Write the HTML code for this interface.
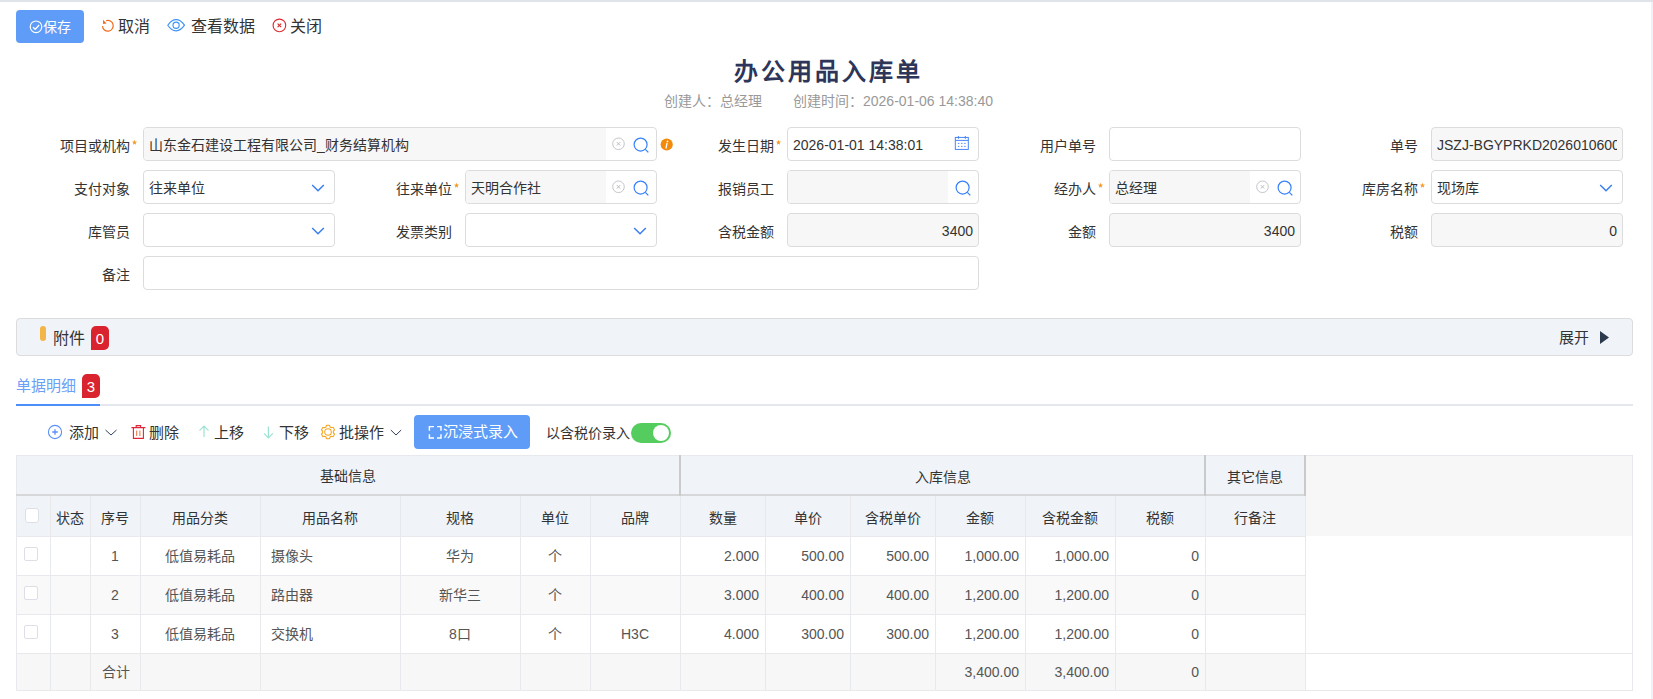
<!DOCTYPE html>
<html lang="zh-CN"><head><meta charset="utf-8"><title>办公用品入库单</title>
<style>
html,body{margin:0;padding:0;background:#fff;}
body{position:relative;width:1653px;height:699px;overflow:hidden;font-family:'Liberation Sans', sans-serif;}
div{box-sizing:content-box;}
svg{overflow:visible;}
</style></head><body>
<div style="position:absolute;left:0px;top:0px;width:1653px;height:2px;background:#dfe3ea"></div>
<div style="position:absolute;left:1651px;top:2px;width:2px;height:697px;background:#eef1f7"></div>
<div style="position:absolute;left:16px;top:10px;width:68px;height:33px;background:#5e9cf8;border-radius:4px"></div>
<svg style="position:absolute;left:29px;top:20px" width="14" height="14" viewBox="0 0 14 14"><circle cx="7" cy="6.8" r="5.8" fill="none" stroke="#fff" stroke-width="1.15"/><path d="M4 7.2 L6.2 9.3 L10.2 5" fill="none" stroke="#fff" stroke-width="1.3"/></svg>
<div style="position:absolute;left:43px;top:15.5px;width:400px;height:22px;line-height:22px;font-size:14px;color:#fff;text-align:left;font-weight:normal;white-space:nowrap;">保存</div>
<svg style="position:absolute;left:98px;top:16px" width="20" height="20" viewBox="0 0 20 20"><path d="M4.5 10.1 A5.35 5.35 0 1 0 8.1 4.7" fill="none" stroke="#f26b1d" stroke-width="1.2"/><path d="M5.0 3.8 L5.1 7.9 L8.5 7.5 Z" fill="#f26b1d"/></svg>
<div style="position:absolute;left:118px;top:13.5px;width:400px;height:25px;line-height:25px;font-size:16px;color:#333;text-align:left;font-weight:normal;white-space:nowrap;">取消</div>
<svg style="position:absolute;left:164px;top:14px" width="24" height="24" viewBox="0 0 24 24"><path d="M3.8 11.2 C6.5 7.2 9 5.6 12.1 5.6 C15.2 5.6 17.7 7.2 20.5 11.2 C17.7 15.2 15.2 16.8 12.1 16.8 C9 16.8 6.5 15.2 3.8 11.2 Z" fill="none" stroke="#3d93f7" stroke-width="1.15"/><circle cx="12.1" cy="11.2" r="3.1" fill="none" stroke="#3d93f7" stroke-width="1.15"/></svg>
<div style="position:absolute;left:190.5px;top:13.5px;width:400px;height:25px;line-height:25px;font-size:16px;color:#333;text-align:left;font-weight:normal;white-space:nowrap;">查看数据</div>
<svg style="position:absolute;left:272px;top:18.4px" width="15" height="15" viewBox="0 0 15 15"><circle cx="7.4" cy="7.4" r="6.3" fill="none" stroke="#e02a30" stroke-width="1.15"/><path d="M5.6 5.6 L9.2 9.2 M9.2 5.6 L5.6 9.2" stroke="#e02a30" stroke-width="1.2"/></svg>
<div style="position:absolute;left:289.5px;top:13.5px;width:400px;height:25px;line-height:25px;font-size:16px;color:#333;text-align:left;font-weight:normal;white-space:nowrap;">关闭</div>
<div style="position:absolute;left:627.0px;top:53.0px;width:400px;height:38px;line-height:38px;font-size:24px;color:#2d3559;text-align:center;font-weight:bold;white-space:nowrap;letter-spacing:3px;text-indent:3px">办公用品入库单</div>
<div style="position:absolute;left:664px;top:90.0px;width:200px;height:22px;line-height:22px;font-size:14px;color:#999;text-align:left;font-weight:normal;white-space:nowrap;">创建人：总经理</div>
<div style="position:absolute;left:793px;top:90.0px;width:300px;height:22px;line-height:22px;font-size:14px;color:#999;text-align:left;font-weight:normal;white-space:nowrap;">创建时间：2026-01-06 14:38:40</div>
<div style="position:absolute;left:10px;top:134.5px;width:120px;height:22px;line-height:22px;font-size:14px;color:#333;text-align:right;font-weight:normal;white-space:nowrap;">项目或机构</div>
<svg style="position:absolute;left:130px;top:138.0px" width="9" height="9" viewBox="0 0 9 9"><path d="M4.50 1.75 L5.18 3.57 L7.12 3.65 L5.59 4.86 L6.12 6.72 L4.50 5.65 L2.88 6.72 L3.41 4.86 L1.88 3.65 L3.82 3.57 Z" fill="#f39a2b"/></svg>
<div style="position:absolute;left:143px;top:127px;width:512px;height:32px;border:1px solid #dcdcdc;border-radius:4px;background:#fff"></div>
<div style="position:absolute;left:144px;top:128px;width:462px;height:32px;background:#f7f7f7;border-radius:3px 0 0 3px"></div>
<div style="position:absolute;left:149px;top:134.0px;width:453px;height:22px;line-height:22px;font-size:14px;color:#333;text-align:left;font-weight:normal;white-space:nowrap;">山东金石建设工程有限公司_财务结算机构</div>
<svg style="position:absolute;left:611px;top:137px" width="14" height="14" viewBox="0 0 14 14"><circle cx="7.5" cy="6.8" r="5.8" fill="none" stroke="#c3c6cc" stroke-width="1"/><path d="M5.8 5.1 L9.2 8.5 M9.2 5.1 L5.8 8.5" stroke="#b8bcc4" stroke-width="1"/></svg>
<svg style="position:absolute;left:633px;top:137px" width="17" height="17" viewBox="0 0 17 17"><circle cx="7.6" cy="7.6" r="6.5" fill="none" stroke="#3580f8" stroke-width="1.2"/><path d="M12.3 12.3 L15.3 15.3" stroke="#3580f8" stroke-width="1.2"/></svg>
<svg style="position:absolute;left:660px;top:138px" width="13" height="13" viewBox="0 0 13 13"><circle cx="6.7" cy="6.5" r="6.1" fill="#f28b0c"/><circle cx="7.5" cy="3.4" r="0.85" fill="#fff"/><path d="M7 5.4 L6 10" stroke="#fff" stroke-width="1.25" stroke-linecap="round"/></svg>
<div style="position:absolute;left:654px;top:134.5px;width:120px;height:22px;line-height:22px;font-size:14px;color:#333;text-align:right;font-weight:normal;white-space:nowrap;">发生日期</div>
<svg style="position:absolute;left:774px;top:138.0px" width="9" height="9" viewBox="0 0 9 9"><path d="M4.50 1.75 L5.18 3.57 L7.12 3.65 L5.59 4.86 L6.12 6.72 L4.50 5.65 L2.88 6.72 L3.41 4.86 L1.88 3.65 L3.82 3.57 Z" fill="#f39a2b"/></svg>
<div style="position:absolute;left:787px;top:127px;width:190px;height:32px;border:1px solid #dcdcdc;border-radius:4px;background:#fff"></div>
<div style="position:absolute;left:793px;top:134.0px;width:160px;height:22px;line-height:22px;font-size:14px;color:#333;text-align:left;font-weight:normal;white-space:nowrap;">2026-01-01 14:38:01</div>
<svg style="position:absolute;left:948px;top:130px" width="28" height="28" viewBox="0 0 28 28"><rect x="7.3" y="7.4" width="13" height="12" fill="none" stroke="#3f7ff5" stroke-width="0.95"/><path d="M7.3 10.4 H20.3 M10.4 6 V8.8 M17.3 6 V8.8" fill="none" stroke="#3f7ff5" stroke-width="0.95"/><path d="M9.9 13.4 h1.4 M13.1 13.4 h1.4 M16.2 13.4 h1.4 M9.9 16.4 h1.4 M13.1 16.4 h1.4 M16.2 16.4 h1.4" stroke="#3f7ff5" stroke-width="0.95"/></svg>
<div style="position:absolute;left:976px;top:134.5px;width:120px;height:22px;line-height:22px;font-size:14px;color:#333;text-align:right;font-weight:normal;white-space:nowrap;">用户单号</div>
<div style="position:absolute;left:1109px;top:127px;width:190px;height:32px;border:1px solid #dcdcdc;border-radius:4px;background:#fff"></div>
<div style="position:absolute;left:1298px;top:134.5px;width:120px;height:22px;line-height:22px;font-size:14px;color:#333;text-align:right;font-weight:normal;white-space:nowrap;">单号</div>
<div style="position:absolute;left:1431px;top:127px;width:190px;height:32px;border:1px solid #dcdcdc;border-radius:4px;background:#f7f7f7"></div>
<div style="position:absolute;left:1437px;top:134.0px;width:180px;height:22px;line-height:22px;font-size:14px;color:#333;text-align:left;font-weight:normal;white-space:nowrap;overflow:hidden">JSZJ-BGYPRKD20260106001</div>
<div style="position:absolute;left:10px;top:177.5px;width:120px;height:22px;line-height:22px;font-size:14px;color:#333;text-align:right;font-weight:normal;white-space:nowrap;">支付对象</div>
<div style="position:absolute;left:143px;top:170px;width:190px;height:32px;border:1px solid #dcdcdc;border-radius:4px;background:#fff"></div>
<div style="position:absolute;left:149px;top:177.0px;width:120px;height:22px;line-height:22px;font-size:14px;color:#333;text-align:left;font-weight:normal;white-space:nowrap;">往来单位</div>
<svg style="position:absolute;left:311px;top:183px" width="14" height="10" viewBox="0 0 14 10"><path d="M1.2 2 L7 7.8 L12.8 2" fill="none" stroke="#3b7ef0" stroke-width="1.5"/></svg>
<div style="position:absolute;left:332px;top:177.5px;width:120px;height:22px;line-height:22px;font-size:14px;color:#333;text-align:right;font-weight:normal;white-space:nowrap;">往来单位</div>
<svg style="position:absolute;left:452px;top:181.0px" width="9" height="9" viewBox="0 0 9 9"><path d="M4.50 1.75 L5.18 3.57 L7.12 3.65 L5.59 4.86 L6.12 6.72 L4.50 5.65 L2.88 6.72 L3.41 4.86 L1.88 3.65 L3.82 3.57 Z" fill="#f39a2b"/></svg>
<div style="position:absolute;left:465px;top:170px;width:190px;height:32px;border:1px solid #dcdcdc;border-radius:4px;background:#fff"></div>
<div style="position:absolute;left:466px;top:171px;width:140px;height:32px;background:#f7f7f7;border-radius:3px 0 0 3px"></div>
<div style="position:absolute;left:471px;top:177.0px;width:131px;height:22px;line-height:22px;font-size:14px;color:#333;text-align:left;font-weight:normal;white-space:nowrap;">天明合作社</div>
<svg style="position:absolute;left:611px;top:180px" width="14" height="14" viewBox="0 0 14 14"><circle cx="7.5" cy="6.8" r="5.8" fill="none" stroke="#c3c6cc" stroke-width="1"/><path d="M5.8 5.1 L9.2 8.5 M9.2 5.1 L5.8 8.5" stroke="#b8bcc4" stroke-width="1"/></svg>
<svg style="position:absolute;left:633px;top:180px" width="17" height="17" viewBox="0 0 17 17"><circle cx="7.6" cy="7.6" r="6.5" fill="none" stroke="#3580f8" stroke-width="1.2"/><path d="M12.3 12.3 L15.3 15.3" stroke="#3580f8" stroke-width="1.2"/></svg>
<div style="position:absolute;left:654px;top:177.5px;width:120px;height:22px;line-height:22px;font-size:14px;color:#333;text-align:right;font-weight:normal;white-space:nowrap;">报销员工</div>
<div style="position:absolute;left:787px;top:170px;width:190px;height:32px;border:1px solid #dcdcdc;border-radius:4px;background:#fff"></div>
<div style="position:absolute;left:788px;top:171px;width:160px;height:32px;background:#f7f7f7;border-radius:3px 0 0 3px"></div>
<svg style="position:absolute;left:955px;top:180px" width="17" height="17" viewBox="0 0 17 17"><circle cx="7.6" cy="7.6" r="6.5" fill="none" stroke="#3580f8" stroke-width="1.2"/><path d="M12.3 12.3 L15.3 15.3" stroke="#3580f8" stroke-width="1.2"/></svg>
<div style="position:absolute;left:976px;top:177.5px;width:120px;height:22px;line-height:22px;font-size:14px;color:#333;text-align:right;font-weight:normal;white-space:nowrap;">经办人</div>
<svg style="position:absolute;left:1096px;top:181.0px" width="9" height="9" viewBox="0 0 9 9"><path d="M4.50 1.75 L5.18 3.57 L7.12 3.65 L5.59 4.86 L6.12 6.72 L4.50 5.65 L2.88 6.72 L3.41 4.86 L1.88 3.65 L3.82 3.57 Z" fill="#f39a2b"/></svg>
<div style="position:absolute;left:1109px;top:170px;width:190px;height:32px;border:1px solid #dcdcdc;border-radius:4px;background:#fff"></div>
<div style="position:absolute;left:1110px;top:171px;width:140px;height:32px;background:#f7f7f7;border-radius:3px 0 0 3px"></div>
<div style="position:absolute;left:1115px;top:177.0px;width:131px;height:22px;line-height:22px;font-size:14px;color:#333;text-align:left;font-weight:normal;white-space:nowrap;">总经理</div>
<svg style="position:absolute;left:1255px;top:180px" width="14" height="14" viewBox="0 0 14 14"><circle cx="7.5" cy="6.8" r="5.8" fill="none" stroke="#c3c6cc" stroke-width="1"/><path d="M5.8 5.1 L9.2 8.5 M9.2 5.1 L5.8 8.5" stroke="#b8bcc4" stroke-width="1"/></svg>
<svg style="position:absolute;left:1277px;top:180px" width="17" height="17" viewBox="0 0 17 17"><circle cx="7.6" cy="7.6" r="6.5" fill="none" stroke="#3580f8" stroke-width="1.2"/><path d="M12.3 12.3 L15.3 15.3" stroke="#3580f8" stroke-width="1.2"/></svg>
<div style="position:absolute;left:1298px;top:177.5px;width:120px;height:22px;line-height:22px;font-size:14px;color:#333;text-align:right;font-weight:normal;white-space:nowrap;">库房名称</div>
<svg style="position:absolute;left:1418px;top:181.0px" width="9" height="9" viewBox="0 0 9 9"><path d="M4.50 1.75 L5.18 3.57 L7.12 3.65 L5.59 4.86 L6.12 6.72 L4.50 5.65 L2.88 6.72 L3.41 4.86 L1.88 3.65 L3.82 3.57 Z" fill="#f39a2b"/></svg>
<div style="position:absolute;left:1431px;top:170px;width:190px;height:32px;border:1px solid #dcdcdc;border-radius:4px;background:#fff"></div>
<div style="position:absolute;left:1437px;top:177.0px;width:120px;height:22px;line-height:22px;font-size:14px;color:#333;text-align:left;font-weight:normal;white-space:nowrap;">现场库</div>
<svg style="position:absolute;left:1599px;top:183px" width="14" height="10" viewBox="0 0 14 10"><path d="M1.2 2 L7 7.8 L12.8 2" fill="none" stroke="#3b7ef0" stroke-width="1.5"/></svg>
<div style="position:absolute;left:10px;top:220.5px;width:120px;height:22px;line-height:22px;font-size:14px;color:#333;text-align:right;font-weight:normal;white-space:nowrap;">库管员</div>
<div style="position:absolute;left:143px;top:213px;width:190px;height:32px;border:1px solid #dcdcdc;border-radius:4px;background:#fff"></div>
<svg style="position:absolute;left:311px;top:226px" width="14" height="10" viewBox="0 0 14 10"><path d="M1.2 2 L7 7.8 L12.8 2" fill="none" stroke="#3b7ef0" stroke-width="1.5"/></svg>
<div style="position:absolute;left:332px;top:220.5px;width:120px;height:22px;line-height:22px;font-size:14px;color:#333;text-align:right;font-weight:normal;white-space:nowrap;">发票类别</div>
<div style="position:absolute;left:465px;top:213px;width:190px;height:32px;border:1px solid #dcdcdc;border-radius:4px;background:#fff"></div>
<svg style="position:absolute;left:633px;top:226px" width="14" height="10" viewBox="0 0 14 10"><path d="M1.2 2 L7 7.8 L12.8 2" fill="none" stroke="#3b7ef0" stroke-width="1.5"/></svg>
<div style="position:absolute;left:654px;top:220.5px;width:120px;height:22px;line-height:22px;font-size:14px;color:#333;text-align:right;font-weight:normal;white-space:nowrap;">含税金额</div>
<div style="position:absolute;left:787px;top:213px;width:190px;height:32px;border:1px solid #dcdcdc;border-radius:4px;background:#f7f7f7"></div>
<div style="position:absolute;left:873px;top:220.0px;width:100px;height:22px;line-height:22px;font-size:14px;color:#333;text-align:right;font-weight:normal;white-space:nowrap;">3400</div>
<div style="position:absolute;left:976px;top:220.5px;width:120px;height:22px;line-height:22px;font-size:14px;color:#333;text-align:right;font-weight:normal;white-space:nowrap;">金额</div>
<div style="position:absolute;left:1109px;top:213px;width:190px;height:32px;border:1px solid #dcdcdc;border-radius:4px;background:#f7f7f7"></div>
<div style="position:absolute;left:1195px;top:220.0px;width:100px;height:22px;line-height:22px;font-size:14px;color:#333;text-align:right;font-weight:normal;white-space:nowrap;">3400</div>
<div style="position:absolute;left:1298px;top:220.5px;width:120px;height:22px;line-height:22px;font-size:14px;color:#333;text-align:right;font-weight:normal;white-space:nowrap;">税额</div>
<div style="position:absolute;left:1431px;top:213px;width:190px;height:32px;border:1px solid #dcdcdc;border-radius:4px;background:#f7f7f7"></div>
<div style="position:absolute;left:1517px;top:220.0px;width:100px;height:22px;line-height:22px;font-size:14px;color:#333;text-align:right;font-weight:normal;white-space:nowrap;">0</div>
<div style="position:absolute;left:10px;top:263.5px;width:120px;height:22px;line-height:22px;font-size:14px;color:#333;text-align:right;font-weight:normal;white-space:nowrap;">备注</div>
<div style="position:absolute;left:143px;top:256px;width:834px;height:32px;border:1px solid #dcdcdc;border-radius:4px;background:#fff"></div>
<div style="position:absolute;left:16px;top:318px;width:1615px;height:36px;border:1px solid #dcdcdc;border-radius:4px;background:#f0f3f8"></div>
<div style="position:absolute;left:40px;top:326px;width:6px;height:15px;background:#f3b548;border-radius:3px"></div>
<div style="position:absolute;left:53px;top:326.0px;width:60px;height:25px;line-height:25px;font-size:16px;color:#333;text-align:left;font-weight:normal;white-space:nowrap;">附件</div>
<div style="position:absolute;left:91px;top:326px;width:18px;height:24px;background:#d9232e;border-radius:5px 5px 5px 0"></div>
<div style="position:absolute;left:91.0px;top:327.0px;width:18px;height:24px;line-height:24px;font-size:15px;color:#fff;text-align:center;font-weight:normal;white-space:nowrap;">0</div>
<div style="position:absolute;left:1529px;top:325.5px;width:60px;height:24px;line-height:24px;font-size:15px;color:#333;text-align:right;font-weight:normal;white-space:nowrap;">展开</div>
<svg style="position:absolute;left:1599px;top:330px" width="11" height="15" viewBox="0 0 11 15"><path d="M1 1 L10 7.5 L1 14 Z" fill="#2c3a4e"/></svg>
<div style="position:absolute;left:16px;top:374.0px;width:80px;height:24px;line-height:24px;font-size:15px;color:#6aa0f5;text-align:left;font-weight:normal;white-space:nowrap;">单据明细</div>
<div style="position:absolute;left:82px;top:374px;width:18px;height:24px;background:#d9232e;border-radius:5px 5px 5px 0"></div>
<div style="position:absolute;left:82.0px;top:375.0px;width:18px;height:24px;line-height:24px;font-size:15px;color:#fff;text-align:center;font-weight:normal;white-space:nowrap;">3</div>
<div style="position:absolute;left:16px;top:404px;width:1617px;height:2px;background:#e4e7ed"></div>
<div style="position:absolute;left:16px;top:404px;width:84px;height:2px;background:#4d8ff8"></div>
<svg style="position:absolute;left:47px;top:424px" width="16" height="16" viewBox="0 0 16 16"><circle cx="8" cy="8" r="6.6" fill="none" stroke="#5b8ff9" stroke-width="1.1"/><path d="M8 5.2 V10.8 M5.2 8 H10.8" stroke="#5b8ff9" stroke-width="1.3"/></svg>
<div style="position:absolute;left:68.5px;top:420.8px;width:40px;height:24px;line-height:24px;font-size:15px;color:#333;text-align:left;font-weight:normal;white-space:nowrap;">添加</div>
<svg style="position:absolute;left:104px;top:428px" width="14" height="9" viewBox="0 0 14 9"><path d="M1.5 2 L7 7 L12.5 2" fill="none" stroke="#34405a" stroke-width="1"/></svg>
<svg style="position:absolute;left:131px;top:424px" width="15" height="16" viewBox="0 0 15 16"><path d="M0.4 3.6 H14.4 M5.2 3.6 V1.6 H9.6 V3.6 M2.4 3.6 V14.4 H12.4 V3.6" fill="none" stroke="#e0243a" stroke-width="1.1"/><path d="M5.7 6.5 V12 M8.9 6.5 V12" stroke="#e8703a" stroke-width="1"/></svg>
<div style="position:absolute;left:149px;top:420.8px;width:40px;height:24px;line-height:24px;font-size:15px;color:#333;text-align:left;font-weight:normal;white-space:nowrap;">删除</div>
<svg style="position:absolute;left:197px;top:424px" width="14" height="16" viewBox="0 0 14 16"><path d="M7 2 V13 M2.5 6.6 L7 2 L11.5 6.6" fill="none" stroke="#9fe2d3" stroke-width="1.2"/></svg>
<div style="position:absolute;left:214px;top:420.8px;width:40px;height:24px;line-height:24px;font-size:15px;color:#333;text-align:left;font-weight:normal;white-space:nowrap;">上移</div>
<svg style="position:absolute;left:261px;top:424px" width="15" height="16" viewBox="0 0 15 16"><path d="M7.4 2.5 V13.8 M3 9.3 L7.4 13.8 L11.8 9.3" fill="none" stroke="#9fe2d3" stroke-width="1.2"/></svg>
<div style="position:absolute;left:279px;top:420.8px;width:40px;height:24px;line-height:24px;font-size:15px;color:#333;text-align:left;font-weight:normal;white-space:nowrap;">下移</div>
<svg style="position:absolute;left:320px;top:424px" width="16" height="16" viewBox="0 0 16 16"><path d="M5.98 2.99 L6.45 1.28 L9.55 1.28 L10.02 2.99 L11.32 3.74 L13.05 3.29 L14.60 5.98 L13.35 7.25 L13.35 8.75 L14.60 10.02 L13.05 12.71 L11.32 12.26 L10.02 13.01 L9.55 14.72 L6.45 14.72 L5.98 13.01 L4.68 12.26 L2.95 12.71 L1.40 10.02 L2.65 8.75 L2.65 7.25 L1.40 5.98 L2.95 3.29 L4.68 3.74 Z" fill="none" stroke="#f5a623" stroke-width="1.1" stroke-linejoin="round"/><circle cx="8" cy="8" r="3.3" fill="none" stroke="#f5a623" stroke-width="1.1"/></svg>
<div style="position:absolute;left:339px;top:420.8px;width:60px;height:24px;line-height:24px;font-size:15px;color:#333;text-align:left;font-weight:normal;white-space:nowrap;">批操作</div>
<svg style="position:absolute;left:389px;top:428px" width="14" height="9" viewBox="0 0 14 9"><path d="M1.8 2 L7 7 L12.2 2" fill="none" stroke="#34405a" stroke-width="1"/></svg>
<div style="position:absolute;left:414px;top:415px;width:116px;height:34px;background:#5e9cf8;border-radius:4px"></div>
<svg style="position:absolute;left:428px;top:425px" width="14" height="14" viewBox="0 0 14 14"><path d="M1.4 5.8 V1.6 H6 M9 1.6 H13 V5.8 M1.4 9.2 V13 H6 M9 13 H13 V9.2" fill="none" stroke="#fff" stroke-width="1.45"/></svg>
<div style="position:absolute;left:443px;top:420.0px;width:90px;height:24px;line-height:24px;font-size:15px;color:#fff;text-align:left;font-weight:normal;white-space:nowrap;">沉浸式录入</div>
<div style="position:absolute;left:546px;top:421.5px;width:90px;height:22px;line-height:22px;font-size:14px;color:#333;text-align:left;font-weight:normal;white-space:nowrap;">以含税价录入</div>
<div style="position:absolute;left:631px;top:423px;width:40px;height:20px;background:#55cd5e;border-radius:10px"></div>
<div style="position:absolute;left:653px;top:425px;width:16px;height:16px;background:#fff;border-radius:50%"></div>
<div style="position:absolute;left:16px;top:455px;width:1289px;height:81px;background:#f0f3f8"></div>
<div style="position:absolute;left:1305px;top:455px;width:328px;height:81px;background:#f7f7f7"></div>
<div style="position:absolute;left:16px;top:536px;width:1289px;height:39px;background:#fff"></div>
<div style="position:absolute;left:16px;top:575px;width:1289px;height:39px;background:#f9f9f9"></div>
<div style="position:absolute;left:16px;top:614px;width:1289px;height:39px;background:#fff"></div>
<div style="position:absolute;left:16px;top:653px;width:1617px;height:37px;background:#fff"></div>
<div style="position:absolute;left:16px;top:653px;width:1289px;height:37px;background:#f7f7f7"></div>
<div style="position:absolute;left:16px;top:455px;width:1615px;height:234px;border:1px solid #e8e9ec"></div>
<div style="position:absolute;left:16px;top:494px;width:1289px;height:2px;background:#d6d7d9"></div>
<div style="position:absolute;left:16px;top:536px;width:1289px;height:1px;background:#e8e9ec"></div>
<div style="position:absolute;left:16px;top:575px;width:1289px;height:1px;background:#e8e9ec"></div>
<div style="position:absolute;left:16px;top:614px;width:1289px;height:1px;background:#e8e9ec"></div>
<div style="position:absolute;left:16px;top:653px;width:1617px;height:1px;background:#e8e9ec"></div>
<div style="position:absolute;left:50px;top:496px;width:1px;height:194px;background:#e8e9ec"></div>
<div style="position:absolute;left:90px;top:496px;width:1px;height:194px;background:#e8e9ec"></div>
<div style="position:absolute;left:140px;top:496px;width:1px;height:194px;background:#e8e9ec"></div>
<div style="position:absolute;left:260px;top:496px;width:1px;height:194px;background:#e8e9ec"></div>
<div style="position:absolute;left:400px;top:496px;width:1px;height:194px;background:#e8e9ec"></div>
<div style="position:absolute;left:520px;top:496px;width:1px;height:194px;background:#e8e9ec"></div>
<div style="position:absolute;left:590px;top:496px;width:1px;height:194px;background:#e8e9ec"></div>
<div style="position:absolute;left:680px;top:496px;width:1px;height:194px;background:#e8e9ec"></div>
<div style="position:absolute;left:765px;top:496px;width:1px;height:194px;background:#e8e9ec"></div>
<div style="position:absolute;left:850px;top:496px;width:1px;height:194px;background:#e8e9ec"></div>
<div style="position:absolute;left:935px;top:496px;width:1px;height:194px;background:#e8e9ec"></div>
<div style="position:absolute;left:1025px;top:496px;width:1px;height:194px;background:#e8e9ec"></div>
<div style="position:absolute;left:1115px;top:496px;width:1px;height:194px;background:#e8e9ec"></div>
<div style="position:absolute;left:1205px;top:496px;width:1px;height:194px;background:#e8e9ec"></div>
<div style="position:absolute;left:1305px;top:496px;width:1px;height:194px;background:#e8e9ec"></div>
<div style="position:absolute;left:679px;top:455px;width:2px;height:41px;background:#cacaca"></div>
<div style="position:absolute;left:1204px;top:455px;width:2px;height:41px;background:#cacaca"></div>
<div style="position:absolute;left:1304px;top:455px;width:2px;height:41px;background:#cacaca"></div>
<div style="position:absolute;left:248.0px;top:466.0px;width:200px;height:21px;line-height:21px;font-size:14px;color:#333;text-align:center;font-weight:normal;white-space:nowrap;">基础信息</div>
<div style="position:absolute;left:842.5px;top:465.5px;width:200px;height:22px;line-height:22px;font-size:14px;color:#333;text-align:center;font-weight:normal;white-space:nowrap;">入库信息</div>
<div style="position:absolute;left:1205.0px;top:465.5px;width:100px;height:22px;line-height:22px;font-size:14px;color:#333;text-align:center;font-weight:normal;white-space:nowrap;">其它信息</div>
<div style="position:absolute;left:50.0px;top:506.5px;width:40px;height:22px;line-height:22px;font-size:14px;color:#333;text-align:center;font-weight:normal;white-space:nowrap;">状态</div>
<div style="position:absolute;left:90.0px;top:506.5px;width:50px;height:22px;line-height:22px;font-size:14px;color:#333;text-align:center;font-weight:normal;white-space:nowrap;">序号</div>
<div style="position:absolute;left:140.0px;top:506.5px;width:120px;height:22px;line-height:22px;font-size:14px;color:#333;text-align:center;font-weight:normal;white-space:nowrap;">用品分类</div>
<div style="position:absolute;left:260.0px;top:506.5px;width:140px;height:22px;line-height:22px;font-size:14px;color:#333;text-align:center;font-weight:normal;white-space:nowrap;">用品名称</div>
<div style="position:absolute;left:400.0px;top:506.5px;width:120px;height:22px;line-height:22px;font-size:14px;color:#333;text-align:center;font-weight:normal;white-space:nowrap;">规格</div>
<div style="position:absolute;left:520.0px;top:506.5px;width:70px;height:22px;line-height:22px;font-size:14px;color:#333;text-align:center;font-weight:normal;white-space:nowrap;">单位</div>
<div style="position:absolute;left:590.0px;top:506.5px;width:90px;height:22px;line-height:22px;font-size:14px;color:#333;text-align:center;font-weight:normal;white-space:nowrap;">品牌</div>
<div style="position:absolute;left:680.0px;top:506.5px;width:85px;height:22px;line-height:22px;font-size:14px;color:#333;text-align:center;font-weight:normal;white-space:nowrap;">数量</div>
<div style="position:absolute;left:765.0px;top:506.5px;width:85px;height:22px;line-height:22px;font-size:14px;color:#333;text-align:center;font-weight:normal;white-space:nowrap;">单价</div>
<div style="position:absolute;left:850.0px;top:506.5px;width:85px;height:22px;line-height:22px;font-size:14px;color:#333;text-align:center;font-weight:normal;white-space:nowrap;">含税单价</div>
<div style="position:absolute;left:935.0px;top:506.5px;width:90px;height:22px;line-height:22px;font-size:14px;color:#333;text-align:center;font-weight:normal;white-space:nowrap;">金额</div>
<div style="position:absolute;left:1025.0px;top:506.5px;width:90px;height:22px;line-height:22px;font-size:14px;color:#333;text-align:center;font-weight:normal;white-space:nowrap;">含税金额</div>
<div style="position:absolute;left:1115.0px;top:506.5px;width:90px;height:22px;line-height:22px;font-size:14px;color:#333;text-align:center;font-weight:normal;white-space:nowrap;">税额</div>
<div style="position:absolute;left:1205.0px;top:506.5px;width:100px;height:22px;line-height:22px;font-size:14px;color:#333;text-align:center;font-weight:normal;white-space:nowrap;">行备注</div>
<div style="position:absolute;left:25px;top:508px;width:12px;height:13px;border:1px solid #dcdfe6;border-radius:3px;background:#fff"></div>
<div style="position:absolute;left:24px;top:546.5px;width:12px;height:12px;border:1px solid #dcdfe6;border-radius:2px;background:#fff"></div>
<div style="position:absolute;left:90.0px;top:544.5px;width:50px;height:22px;line-height:22px;font-size:14px;color:#555;text-align:center;font-weight:normal;white-space:nowrap;">1</div>
<div style="position:absolute;left:140.0px;top:544.5px;width:120px;height:22px;line-height:22px;font-size:14px;color:#555;text-align:center;font-weight:normal;white-space:nowrap;">低值易耗品</div>
<div style="position:absolute;left:271px;top:544.5px;width:128px;height:22px;line-height:22px;font-size:14px;color:#555;text-align:left;font-weight:normal;white-space:nowrap;">摄像头</div>
<div style="position:absolute;left:400.0px;top:544.5px;width:120px;height:22px;line-height:22px;font-size:14px;color:#555;text-align:center;font-weight:normal;white-space:nowrap;">华为</div>
<div style="position:absolute;left:520.0px;top:544.5px;width:70px;height:22px;line-height:22px;font-size:14px;color:#555;text-align:center;font-weight:normal;white-space:nowrap;">个</div>
<div style="position:absolute;left:682px;top:544.5px;width:77px;height:22px;line-height:22px;font-size:14px;color:#555;text-align:right;font-weight:normal;white-space:nowrap;">2.000</div>
<div style="position:absolute;left:767px;top:544.5px;width:77px;height:22px;line-height:22px;font-size:14px;color:#555;text-align:right;font-weight:normal;white-space:nowrap;">500.00</div>
<div style="position:absolute;left:852px;top:544.5px;width:77px;height:22px;line-height:22px;font-size:14px;color:#555;text-align:right;font-weight:normal;white-space:nowrap;">500.00</div>
<div style="position:absolute;left:937px;top:544.5px;width:82px;height:22px;line-height:22px;font-size:14px;color:#555;text-align:right;font-weight:normal;white-space:nowrap;">1,000.00</div>
<div style="position:absolute;left:1027px;top:544.5px;width:82px;height:22px;line-height:22px;font-size:14px;color:#555;text-align:right;font-weight:normal;white-space:nowrap;">1,000.00</div>
<div style="position:absolute;left:1117px;top:544.5px;width:82px;height:22px;line-height:22px;font-size:14px;color:#555;text-align:right;font-weight:normal;white-space:nowrap;">0</div>
<div style="position:absolute;left:24px;top:585.5px;width:12px;height:12px;border:1px solid #dcdfe6;border-radius:2px;background:#fff"></div>
<div style="position:absolute;left:90.0px;top:583.5px;width:50px;height:22px;line-height:22px;font-size:14px;color:#555;text-align:center;font-weight:normal;white-space:nowrap;">2</div>
<div style="position:absolute;left:140.0px;top:583.5px;width:120px;height:22px;line-height:22px;font-size:14px;color:#555;text-align:center;font-weight:normal;white-space:nowrap;">低值易耗品</div>
<div style="position:absolute;left:271px;top:583.5px;width:128px;height:22px;line-height:22px;font-size:14px;color:#555;text-align:left;font-weight:normal;white-space:nowrap;">路由器</div>
<div style="position:absolute;left:400.0px;top:583.5px;width:120px;height:22px;line-height:22px;font-size:14px;color:#555;text-align:center;font-weight:normal;white-space:nowrap;">新华三</div>
<div style="position:absolute;left:520.0px;top:583.5px;width:70px;height:22px;line-height:22px;font-size:14px;color:#555;text-align:center;font-weight:normal;white-space:nowrap;">个</div>
<div style="position:absolute;left:682px;top:583.5px;width:77px;height:22px;line-height:22px;font-size:14px;color:#555;text-align:right;font-weight:normal;white-space:nowrap;">3.000</div>
<div style="position:absolute;left:767px;top:583.5px;width:77px;height:22px;line-height:22px;font-size:14px;color:#555;text-align:right;font-weight:normal;white-space:nowrap;">400.00</div>
<div style="position:absolute;left:852px;top:583.5px;width:77px;height:22px;line-height:22px;font-size:14px;color:#555;text-align:right;font-weight:normal;white-space:nowrap;">400.00</div>
<div style="position:absolute;left:937px;top:583.5px;width:82px;height:22px;line-height:22px;font-size:14px;color:#555;text-align:right;font-weight:normal;white-space:nowrap;">1,200.00</div>
<div style="position:absolute;left:1027px;top:583.5px;width:82px;height:22px;line-height:22px;font-size:14px;color:#555;text-align:right;font-weight:normal;white-space:nowrap;">1,200.00</div>
<div style="position:absolute;left:1117px;top:583.5px;width:82px;height:22px;line-height:22px;font-size:14px;color:#555;text-align:right;font-weight:normal;white-space:nowrap;">0</div>
<div style="position:absolute;left:24px;top:624.5px;width:12px;height:12px;border:1px solid #dcdfe6;border-radius:2px;background:#fff"></div>
<div style="position:absolute;left:90.0px;top:622.5px;width:50px;height:22px;line-height:22px;font-size:14px;color:#555;text-align:center;font-weight:normal;white-space:nowrap;">3</div>
<div style="position:absolute;left:140.0px;top:622.5px;width:120px;height:22px;line-height:22px;font-size:14px;color:#555;text-align:center;font-weight:normal;white-space:nowrap;">低值易耗品</div>
<div style="position:absolute;left:271px;top:622.5px;width:128px;height:22px;line-height:22px;font-size:14px;color:#555;text-align:left;font-weight:normal;white-space:nowrap;">交换机</div>
<div style="position:absolute;left:400.0px;top:622.5px;width:120px;height:22px;line-height:22px;font-size:14px;color:#555;text-align:center;font-weight:normal;white-space:nowrap;">8口</div>
<div style="position:absolute;left:520.0px;top:622.5px;width:70px;height:22px;line-height:22px;font-size:14px;color:#555;text-align:center;font-weight:normal;white-space:nowrap;">个</div>
<div style="position:absolute;left:590.0px;top:622.5px;width:90px;height:22px;line-height:22px;font-size:14px;color:#555;text-align:center;font-weight:normal;white-space:nowrap;">H3C</div>
<div style="position:absolute;left:682px;top:622.5px;width:77px;height:22px;line-height:22px;font-size:14px;color:#555;text-align:right;font-weight:normal;white-space:nowrap;">4.000</div>
<div style="position:absolute;left:767px;top:622.5px;width:77px;height:22px;line-height:22px;font-size:14px;color:#555;text-align:right;font-weight:normal;white-space:nowrap;">300.00</div>
<div style="position:absolute;left:852px;top:622.5px;width:77px;height:22px;line-height:22px;font-size:14px;color:#555;text-align:right;font-weight:normal;white-space:nowrap;">300.00</div>
<div style="position:absolute;left:937px;top:622.5px;width:82px;height:22px;line-height:22px;font-size:14px;color:#555;text-align:right;font-weight:normal;white-space:nowrap;">1,200.00</div>
<div style="position:absolute;left:1027px;top:622.5px;width:82px;height:22px;line-height:22px;font-size:14px;color:#555;text-align:right;font-weight:normal;white-space:nowrap;">1,200.00</div>
<div style="position:absolute;left:1117px;top:622.5px;width:82px;height:22px;line-height:22px;font-size:14px;color:#555;text-align:right;font-weight:normal;white-space:nowrap;">0</div>
<div style="position:absolute;left:91.0px;top:661.0px;width:50px;height:22px;line-height:22px;font-size:14px;color:#555;text-align:center;font-weight:normal;white-space:nowrap;">合计</div>
<div style="position:absolute;left:939px;top:661.0px;width:80px;height:22px;line-height:22px;font-size:14px;color:#555;text-align:right;font-weight:normal;white-space:nowrap;">3,400.00</div>
<div style="position:absolute;left:1029px;top:661.0px;width:80px;height:22px;line-height:22px;font-size:14px;color:#555;text-align:right;font-weight:normal;white-space:nowrap;">3,400.00</div>
<div style="position:absolute;left:1119px;top:661.0px;width:80px;height:22px;line-height:22px;font-size:14px;color:#555;text-align:right;font-weight:normal;white-space:nowrap;">0</div>
</body></html>
